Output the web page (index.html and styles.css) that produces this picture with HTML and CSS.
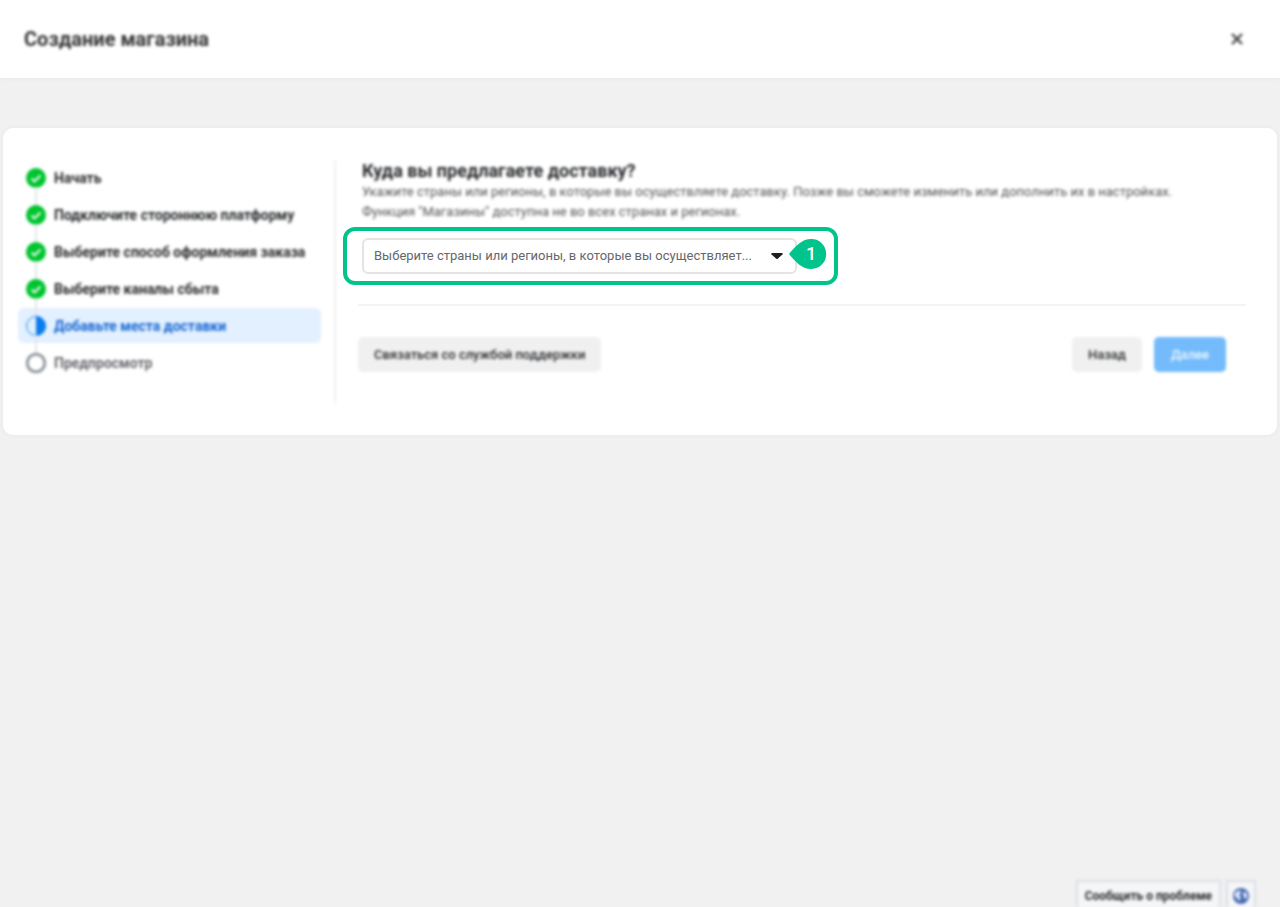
FILE: index.html
```html
<!DOCTYPE html>
<html lang="ru">

<head>
    <meta charset="UTF-8">
    <meta name="viewport" content="width=device-width, initial-scale=1.0">
    <title>Создание магазина</title>
    <link rel="stylesheet" href="styles.css">
</head>

<body>

    <header class="topbar">
        <h1 class="blurred">Создание магазина</h1>
        <button type="button" class="close blurred" aria-label="Закрыть">
            <svg width="12" height="12" viewBox="0 0 12 12"><path d="M1 1l10 10M11 1L1 11" stroke="#444" stroke-width="2.4"/></svg>
        </button>
    </header>

    <main class="card">

        <nav class="steps blurred">
            <ol>
                <li>
                    <svg class="mark" viewBox="0 0 20 20"><circle cx="10" cy="10" r="10" fill="#00c42e"/><path d="M5.5 10.5l3 3 6-6" fill="none" stroke="#fff" stroke-width="1.8"/></svg>
                    Начать
                </li>
                <li>
                    <svg class="mark" viewBox="0 0 20 20"><circle cx="10" cy="10" r="10" fill="#00c42e"/><path d="M5.5 10.5l3 3 6-6" fill="none" stroke="#fff" stroke-width="1.8"/></svg>
                    Подключите стороннюю платформу
                </li>
                <li>
                    <svg class="mark" viewBox="0 0 20 20"><circle cx="10" cy="10" r="10" fill="#00c42e"/><path d="M5.5 10.5l3 3 6-6" fill="none" stroke="#fff" stroke-width="1.8"/></svg>
                    Выберите способ оформления заказа
                </li>
                <li>
                    <svg class="mark" viewBox="0 0 20 20"><circle cx="10" cy="10" r="10" fill="#00c42e"/><path d="M5.5 10.5l3 3 6-6" fill="none" stroke="#fff" stroke-width="1.8"/></svg>
                    Выберите каналы сбыта
                </li>
                <li class="current" aria-current="step">
                    <svg class="mark" viewBox="0 0 20 20"><circle cx="10" cy="10" r="9.4" fill="#e3f0ff" stroke="#1683f3" stroke-width="1"/><path d="M10 0a10 10 0 0 1 0 20z" fill="#0a7cf0"/></svg>
                    Добавьте места доставки
                </li>
                <li class="upcoming">
                    <svg class="mark" viewBox="0 0 20 20"><circle cx="10" cy="10" r="8.8" fill="#fff" stroke="#858c96" stroke-width="2.6"/></svg>
                    Предпросмотр
                </li>
            </ol>
        </nav>

        <section class="content">
            <div class="intro blurred">
                <h2><label for="regions">Куда вы предлагаете доставку?</label></h2>
                <p>Укажите страны или регионы, в которые вы осуществляете доставку. Позже вы сможете изменить или дополнить их в настройках.<br>
                Функция "Магазины" доступна не во всех странах и регионах.</p>
            </div>

            <div class="highlight">
                <div class="picker">
                    <select id="regions" name="regions">
                        <option>Выберите страны или регионы, в которые вы осуществляет...</option>
                    </select>
                    <svg class="arrow" width="12" height="6" viewBox="0 0 12 6"><path d="M1 0h10a.8.8 0 0 1 .6 1.300L7 5.600a1.500 1.500 0 0 1-2 0L.4 1.300A.8.8 0 0 1 1 0z" fill="#1c1e21"/></svg>
                    <span class="badge">
                        <svg viewBox="0 0 38 30"><path d="M0 15C6 8 12 0 22.500 0a14.700 15 0 0 1 0 30C12 30 6 22 0 15z" fill="#00c48c"/></svg>
                        <b>1</b>
                    </span>
                </div>
            </div>

            <hr>

            <div class="actions blurred">
                <button type="button" class="support">Связаться со службой поддержки</button>
                <button type="button">Назад</button>
                <button type="submit" class="next">Далее</button>
            </div>
        </section>

    </main>

    <footer class="tools blurred">
        <button type="button">Сообщить о проблеме</button>
        <button type="button" class="globe" aria-label="Язык">
            <svg width="16" height="16" viewBox="0 0 16 16"><circle cx="8" cy="8" r="8" fill="#4267b2"/><path d="M3 4l4-2 1 3-2 2 2 3-2 3-2-3-3-3zM11 3l3 3v4l-2 1-2-4z" fill="#e4ebf7"/></svg>
        </button>
    </footer>

</body>

</html>
```
FILE: styles.css
```css
* {
    box-sizing: border-box;
}

body {
    display: flex;
    flex-direction: column;
    min-height: 100vh;
    margin: 0;
    background: #f1f1f1;
    color: #26282b;
    font-family: Roboto, Arial, sans-serif;
    font-size: 13px;
    line-height: 20px;
}

h1,
h2,
p,
ol {
    margin: 0;
    padding: 0;
}

button {
    border: 0;
    font: inherit;
    color: inherit;
}

.blurred {
    filter: blur(0.1rem);
}

.topbar {
    display: flex;
    align-items: center;
    justify-content: space-between;
    height: 78px;
    padding: 0 36px 0 24px;
    background: #fff;
    box-shadow: 0 0 4px #e4e4e4;
}

.topbar h1 {
    color: #333;
    font-size: 20px;
    line-height: 24px;
}

.close {
    display: flex;
    padding: 1px;
    background: none;
}

.card {
    display: flex;
    margin: 50px 3px 0;
    padding: 32px 31px 32px 15px;
    background: #fff;
    border-radius: 10px;
    box-shadow: 0 0 4px #e6e6e6;
}

.steps {
    flex: none;
    width: 318px;
    padding-right: 13px;
    border-right: 2px solid #f0f0f0;
}

.steps ol {
    display: flex;
    flex-direction: column;
    gap: 2px;
    list-style: none;
}

.steps li {
    position: relative;
    display: flex;
    align-items: center;
    gap: 8px;
    height: 35px;
    padding-left: 8px;
    border-radius: 6px;
    font-size: 14px;
    font-weight: 700;
    white-space: nowrap;
}

/* thin line that joins the marks */
.steps li + li::before {
    content: "";
    position: absolute;
    top: -10px;
    left: 17px;
    width: 2px;
    height: 18px;
    background: #e4e6e9;
}

.steps .current {
    background: #e3f0ff;
    color: #1264d1;
}

.steps .upcoming {
    color: #65676b;
}

.mark {
    flex: none;
    width: 20px;
    height: 20px;
}

.content {
    flex: 1;
    padding: 0 0 31px 7px;
}

.intro {
    padding-left: 19px;
    color: #505256;
}

.intro h2 {
    color: #26282b;
    font-size: 18px;
    line-height: 22px;
}

.highlight {
    width: 495px;
    max-width: 100%;
    margin-top: 5px;
    padding: 7px 37px 7px 15px;
    border: 4px solid #00c48c;
    border-radius: 12px;
}

.picker {
    position: relative;
}

.picker select {
    display: block;
    width: 100%;
    height: 36px;
    padding: 0 32px 0 10px;
    appearance: none;
    background: #fff;
    border: 2px solid #e4e4e4;
    border-radius: 6px;
    color: #65676b;
    font: inherit;
}

.arrow {
    position: absolute;
    top: 15px;
    right: 14px;
}

.badge {
    position: absolute;
    top: 1px;
    right: -30px;
    width: 38px;
    height: 30px;
}

.badge svg {
    display: block;
    width: 100%;
    height: 100%;
}

.badge b {
    position: absolute;
    top: 0;
    left: 6px;
    width: 32px;
    color: #fff;
    font-size: 18px;
    font-weight: 500;
    line-height: 30px;
    text-align: center;
}

hr {
    height: 2px;
    margin: 19px 0 31px 15px;
    border: 0;
    background: #f4f4f4;
}

.actions {
    display: flex;
    gap: 12px;
    padding: 0 20px 0 15px;
}

.actions button {
    height: 35px;
    padding: 0 16px;
    background: #f0f0f0;
    border-radius: 5px;
    font-weight: 500;
}

.actions .support {
    margin-right: auto;
}

.actions .next {
    padding: 0 17px;
    background: #74bbfb;
    color: #eef7ff;
}

.tools {
    display: flex;
    justify-content: flex-end;
    gap: 5px;
    margin-top: auto;
    padding-right: 24px;
}

.tools button {
    height: 27px;
    padding: 2px 7px 0;
    background: #f5f6f7;
    border: 2px solid #dadee6;
    border-bottom: 0;
    font-size: 12px;
    font-weight: 700;
}

.tools .globe {
    display: flex;
    align-items: center;
    padding: 2px 5px 0;
}
```
